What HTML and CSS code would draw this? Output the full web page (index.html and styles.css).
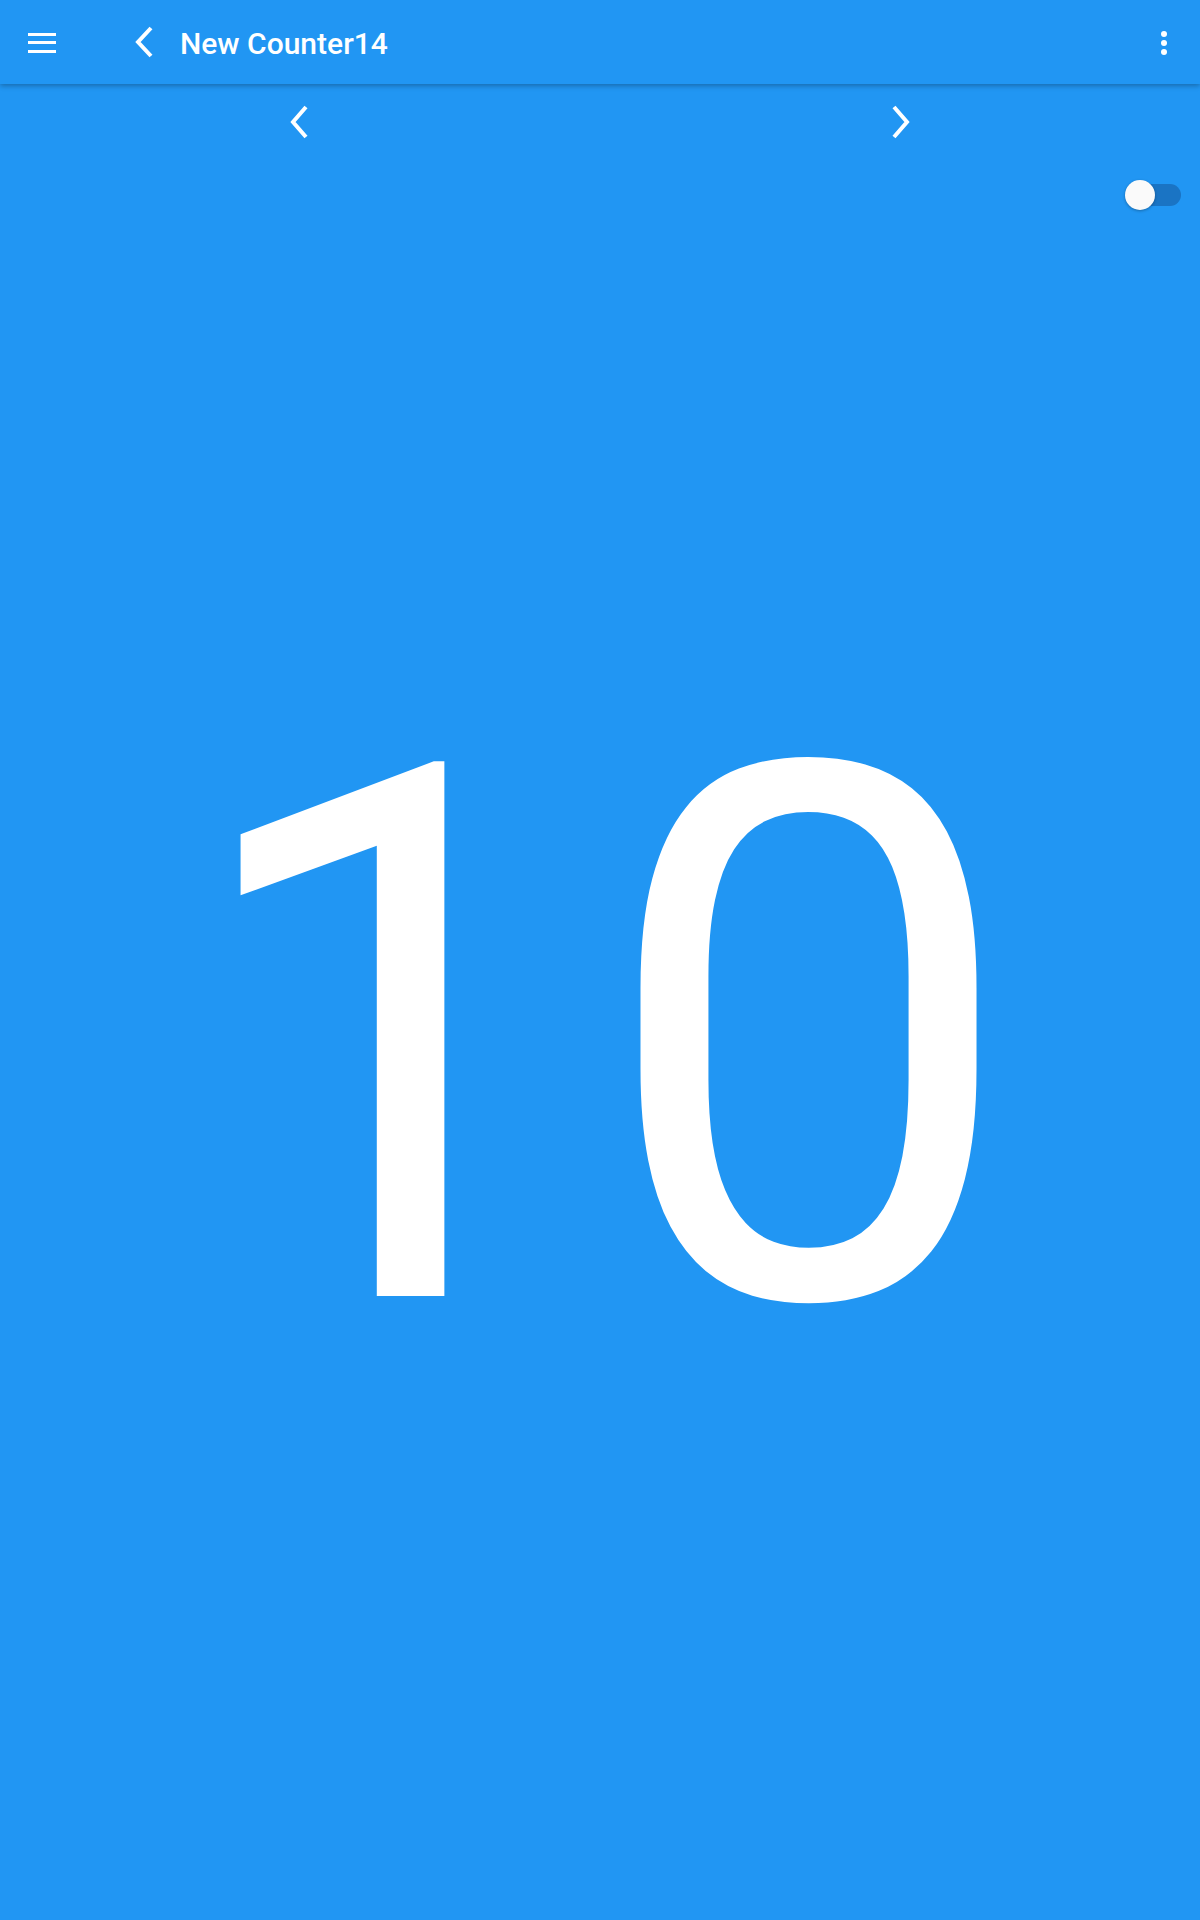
FILE: index.html
```html
<!DOCTYPE html>
<html lang="en">
<head>
    <meta charset="UTF-8">
    <meta name="viewport" content="width=device-width, initial-scale=1.0">
    <title>New Counter14</title>
    <link rel="stylesheet" href="styles.css">
</head>
<body>
    <header class="app-bar">
        <button class="icon-btn menu-btn" aria-label="Menu">
            <span class="bar"></span>
            <span class="bar"></span>
            <span class="bar"></span>
        </button>
        <button class="icon-btn back-btn" aria-label="Back">
            <svg width="22" height="34" viewBox="0 0 22 34">
                <polyline points="17,3 4,17 17,31" fill="none" stroke="#fff" stroke-width="4"/>
            </svg>
        </button>
        <h1 class="title">New Counter14</h1>
        <button class="icon-btn more-btn" aria-label="More">
            <span class="dot"></span>
            <span class="dot"></span>
            <span class="dot"></span>
        </button>
    </header>

    <main>
        <div class="pager">
            <div class="pager-half">
                <svg width="22" height="34" viewBox="0 0 22 34">
                    <polyline points="17,2 4,17 17,32" fill="none" stroke="#fff" stroke-width="4"/>
                </svg>
            </div>
            <div class="pager-half">
                <svg width="22" height="34" viewBox="0 0 22 34">
                    <polyline points="5,2 18,17 5,32" fill="none" stroke="#fff" stroke-width="4"/>
                </svg>
            </div>
        </div>

        <div class="switch-row">
            <div class="switch">
                <span class="track"></span>
                <span class="knob"></span>
            </div>
        </div>

        <div class="counter">10</div>
    </main>
</body>
</html>
```

FILE: styles.css
```css
* {
    margin: 0;
    padding: 0;
    box-sizing: border-box;
}

body {
    font-family: Roboto, "Noto Sans", sans-serif;
    background: #2196f3;
    color: #fff;
    min-height: 100vh;
}

.app-bar {
    height: 84px;
    background: #2196f3;
    display: flex;
    align-items: center;
    padding: 0 33px 0 28px;
    box-shadow: 0 2px 5px rgba(0, 0, 0, 0.28);
    position: relative;
    z-index: 2;
}

.icon-btn {
    background: none;
    border: none;
    display: flex;
}

.menu-btn {
    flex-direction: column;
    gap: 5.5px;
    width: 28px;
    margin-top: 1px;
}

.menu-btn .bar {
    display: block;
    height: 3px;
    background: #fff;
}

.back-btn {
    margin-left: 78px;
}

.title {
    font-size: 30px;
    font-weight: 500;
    margin-left: 24px;
    margin-top: 2px;
    flex: 1;
}

.more-btn {
    flex-direction: column;
    gap: 3px;
    margin-top: 1px;
}

.more-btn .dot {
    width: 6px;
    height: 6px;
    border-radius: 50%;
    background: #fff;
}

.pager {
    display: flex;
    height: 76px;
}

.pager-half {
    flex: 1;
    display: flex;
    align-items: center;
    justify-content: center;
}

.switch-row {
    display: flex;
    justify-content: flex-end;
    padding: 19px 19px 0 0;
}

.switch {
    position: relative;
    width: 56px;
    height: 32px;
}

.track {
    position: absolute;
    left: 3px;
    top: 5px;
    width: 53px;
    height: 22px;
    border-radius: 11px;
    background: #1a74c4;
}

.knob {
    position: absolute;
    left: 0;
    top: 1px;
    width: 30px;
    height: 30px;
    border-radius: 50%;
    background: #fafafa;
    box-shadow: 0 1px 3px rgba(0, 0, 0, 0.3);
}

.counter {
    font-size: 748px;
    font-weight: 400;
    line-height: 1;
    text-align: center;
    padding-top: 456px;
    padding-right: 3px;
}
```
